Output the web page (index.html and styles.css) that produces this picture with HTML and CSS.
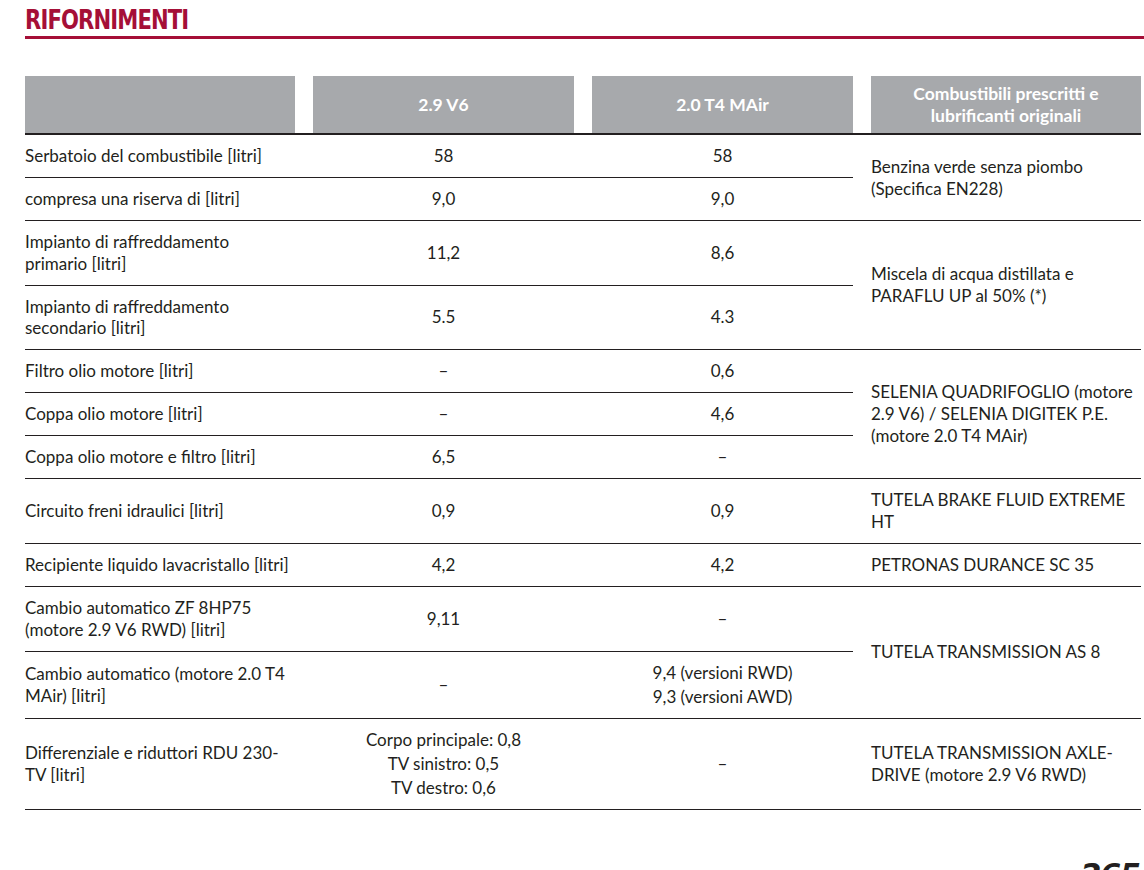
FILE: index.html
```html
<!DOCTYPE html>
<html lang="it">
<head>
<meta charset="utf-8">
<title>Rifornimenti</title>
<link rel="stylesheet" href="styles.css">
</head>
<body>
<div class="page">
  <h1 class="title"><span class="title-text">RIFORNIMENTI</span></h1>
  <table class="fuel">
    <colgroup>
      <col class="c1"><col class="c2"><col class="c3"><col class="c4">
    </colgroup>
    <thead>
      <tr>
        <th class="first"><div class="hcell"></div></th>
        <th><div class="hcell">2.9 V6</div></th>
        <th><div class="hcell">2.0 T4 MAir</div></th>
        <th><div class="hcell">Combustibili prescritti e<br>lubrificanti originali</div></th>
      </tr>
    </thead>
    <tbody>
      <tr>
        <td class="lbl">Serbatoio del combustibile [litri]</td>
        <td class="num">58</td>
        <td class="num">58</td>
        <td class="prod" rowspan="2">Benzina verde senza piombo<br>(Specifica EN228)</td>
      </tr>
      <tr>
        <td class="lbl">compresa una riserva di [litri]</td>
        <td class="num">9,0</td>
        <td class="num">9,0</td>
      </tr>
      <tr>
        <td class="lbl">Impianto di raffreddamento<br>primario [litri]</td>
        <td class="num">11,2</td>
        <td class="num">8,6</td>
        <td class="prod" rowspan="2">Miscela di acqua distillata e<br>PARAFLU UP al 50% (*)</td>
      </tr>
      <tr>
        <td class="lbl">Impianto di raffreddamento<br>secondario [litri]</td>
        <td class="num">5.5</td>
        <td class="num">4.3</td>
      </tr>
      <tr>
        <td class="lbl">Filtro olio motore [litri]</td>
        <td class="num">–</td>
        <td class="num">0,6</td>
        <td class="prod" rowspan="3">SELENIA QUADRIFOGLIO (motore<br>2.9 V6) / SELENIA DIGITEK P.E.<br>(motore 2.0 T4 MAir)</td>
      </tr>
      <tr>
        <td class="lbl">Coppa olio motore [litri]</td>
        <td class="num">–</td>
        <td class="num">4,6</td>
      </tr>
      <tr>
        <td class="lbl">Coppa olio motore e filtro [litri]</td>
        <td class="num">6,5</td>
        <td class="num">–</td>
      </tr>
      <tr>
        <td class="lbl">Circuito freni idraulici [litri]</td>
        <td class="num">0,9</td>
        <td class="num">0,9</td>
        <td class="prod">TUTELA BRAKE FLUID EXTREME<br>HT</td>
      </tr>
      <tr>
        <td class="lbl">Recipiente liquido lavacristallo [litri]</td>
        <td class="num">4,2</td>
        <td class="num">4,2</td>
        <td class="prod">PETRONAS DURANCE SC 35</td>
      </tr>
      <tr>
        <td class="lbl">Cambio automatico ZF 8HP75<br>(motore 2.9 V6 RWD) [litri]</td>
        <td class="num">9,11</td>
        <td class="num">–</td>
        <td class="prod" rowspan="2">TUTELA TRANSMISSION AS 8</td>
      </tr>
      <tr>
        <td class="lbl">Cambio automatico (motore 2.0 T4<br>MAir) [litri]</td>
        <td class="num">–</td>
        <td class="num">9,4 (versioni RWD)<br>9,3 (versioni AWD)</td>
      </tr>
      <tr>
        <td class="lbl">Differenziale e riduttori RDU 230-<br>TV [litri]</td>
        <td class="num">Corpo principale: 0,8<br>TV sinistro: 0,5<br>TV destro: 0,6</td>
        <td class="num">–</td>
        <td class="prod">TUTELA TRANSMISSION AXLE-<br>DRIVE (motore 2.9 V6 RWD)</td>
      </tr>
    </tbody>
  </table>
  <div class="pageno">265</div>
</div>
</body>
</html>
```

FILE: styles.css
```css
html, body {
  margin: 0;
  padding: 0;
  background: #ffffff;
}

body {
  width: 1144px;
  height: 870px;
  overflow: hidden;
  font-family: Lato, "Open Sans", "DejaVu Sans", sans-serif;
  color: #231f20;
}

.page {
  padding-left: 25px;
}

.title {
  margin: 0;
  padding-top: 3px;
  height: 33px;
  line-height: 33px;
  font-family: "DejaVu Sans Condensed", "Liberation Sans Narrow", "DejaVu Sans", sans-serif;
  font-stretch: condensed;
  font-weight: 700;
  font-size: 27px;
  color: #a50f37;
  border-bottom: 3px solid #a50f37;
  box-sizing: content-box;
}

.title-text {
  display: inline-block;
  letter-spacing: -1px;
  transform: scaleX(0.87);
  transform-origin: left center;
}

.fuel {
  margin-top: 37px;
  width: 1116px;
  table-layout: fixed;
  border-collapse: collapse;
  border-spacing: 0;
}

.c1 { width: 270px; }
.c2 { width: 279px; }
.c3 { width: 279px; }
.c4 { width: 288px; }

.fuel th {
  padding: 0 0 0 18px;
  border-bottom: 2px solid #231f20;
  vertical-align: bottom;
}

.fuel th.first {
  padding-left: 0;
}

.hcell {
  height: 57px;
  background: #a7a9ac;
  color: #ffffff;
  font-weight: 700;
  font-size: 17.5px;
  line-height: 22px;
  display: flex;
  align-items: center;
  justify-content: center;
  text-align: center;
}

.fuel td {
  border-bottom: 1px solid #231f20;
  padding: 10.25px 0;
  vertical-align: middle;
  font-size: 17px;
  line-height: 21.5px;
  white-space: nowrap;
}

.fuel td.num {
  padding: 9px 0 9px 18px;
  text-align: center;
  line-height: 24px;
}

.fuel td.num.multi {
  padding: 10px 0 10px 18px;
}

.fuel td.prod {
  padding: 10px 0 10px 18px;
  text-align: left;
  line-height: 22px;
}

.pageno {
  position: absolute;
  top: 857px;
  right: 4px;
  font-family: "DejaVu Sans", sans-serif;
  font-weight: 700;
  font-style: italic;
  font-size: 30px;
  line-height: 36px;
  letter-spacing: -1px;
  color: #231f20;
}
```
